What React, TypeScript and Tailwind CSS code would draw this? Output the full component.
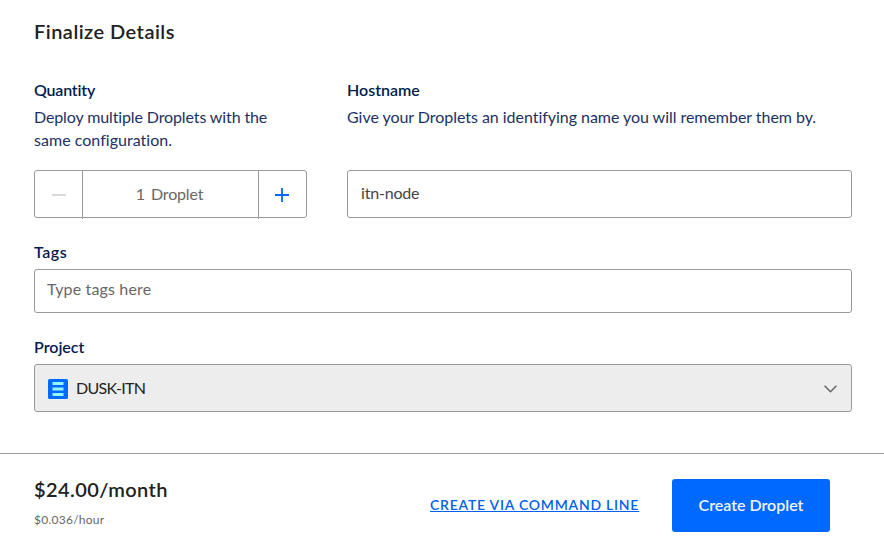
import React from "react";

function FieldLabel({ children, className = "" }: { children: React.ReactNode; className?: string }) {
  return <div className={"h-6 text-base leading-6 font-semibold whitespace-nowrap text-[#031b4e] " + className}>{children}</div>;
}

function ProjectIcon() {
  return (
    <svg width="20" height="20" viewBox="0 0 20 20" className="mt-0.5 shrink-0">
      <rect width="20" height="20" rx="1.5" fill="#0069ff" />
      <path d="M4.5 3h11v3h-11zM4.5 8.5h11v3h-11zM4.5 14h11v3h-11z" fill="#99f4fa" />
    </svg>
  );
}

export default function App() {
  return (
    <div className="h-[551px] w-[884px] overflow-hidden bg-white font-[Lato,'Open_Sans',sans-serif] [font-variant-ligatures:none]">
      <main className="flex h-[453px] flex-col pr-8 pl-[34px]">
        <h1 className="mt-[17px] h-7 text-xl leading-7 font-semibold text-[#222]">
          <span className="tracking-[0.47px]">Finalize Details</span>
        </h1>
        <div className="mt-[33px] flex gap-10">
          <section className="w-[273px]">
            <FieldLabel><span className="tracking-[-0.2px]">Quantity</span></FieldLabel>
            <p className="mt-[3px] h-[65px] text-base leading-[23px] whitespace-nowrap text-[#1b3163]">
              <span className="tracking-[-0.12px]">Deploy multiple Droplets with the</span>
              <br />
              <span className="tracking-[0.03px]">same configuration.</span>
            </p>
            <div className="flex h-12 rounded-[3px] border border-[#999]">
              <button className="flex w-[47px] items-center justify-center pt-0.5" aria-label="Decrease">
                <svg width="14" height="14" viewBox="0 0 14 14" stroke="#ccc" strokeWidth="1.5"><path d="M0 7h14" /></svg>
              </button>
              <div className="flex h-12 w-[177px] items-center justify-center gap-1.5 border-x border-[#999] pr-0.5 pb-0.5 text-base text-[#676767]">
                <span>1</span><span className="tracking-[-0.15px]">Droplet</span>
              </div>
              <button className="flex w-[47px] items-center justify-center pt-0.5 pr-px" aria-label="Increase">
                <svg width="14" height="14" viewBox="0 0 14 14" stroke="#0069ff" strokeWidth="1.8"><path d="M0 7h14M7 0v14" /></svg>
              </button>
            </div>
          </section>
          <section className="w-[505px]">
            <FieldLabel><span>Hostname</span></FieldLabel>
            <p className="mt-[3px] h-[65px] text-base leading-[23px] whitespace-nowrap text-[#1b3163]">
              <span className="tracking-[-0.04px]">Give your Droplets an identifying name you will remember them by.</span>
            </p>
            <div className="flex h-12 items-center rounded-[3px] border border-[#999] px-[13px] pb-0.5 text-base text-[#444]">
              <span className="tracking-[-0.2px]">itn-node</span>
            </div>
          </section>
        </div>
        <FieldLabel className="mt-[22px]"><span className="tracking-[0.5px]">Tags</span></FieldLabel>
        <div className="mt-[5px] flex h-11 items-center rounded-[3px] border border-[#999] px-3 pb-1 text-base text-[#676767]">
          <span className="tracking-[0.15px]">Type tags here</span>
        </div>
        <FieldLabel className="mt-[22px]"><span>Project</span></FieldLabel>
        <div className="mt-[5px] flex h-12 items-center rounded-[3px] border border-[#999] bg-[#ededed] pr-[14px] pl-[13px] text-base text-[#222]">
          <ProjectIcon />
          <span className="ml-2 tracking-[-0.7px]">DUSK-ITN</span>
          <svg className="mt-px ml-auto" width="13" height="8" viewBox="0 0 13 8" fill="none" stroke="#676767" strokeWidth="1.6"><path d="M.6.8l5.9 5.9L12.4.8" /></svg>
        </div>
      </main>
      <footer className="flex h-[98px] items-start border-t border-[#999] pr-[54px] pl-[34px]">
        <div className="mt-[21px] w-[396px]">
          <div className="h-7 text-xl leading-7 font-semibold text-[#222]"><span className="tracking-[0.4px]">$24.00/month</span></div>
          <div className="mt-[7px] h-5 text-xs leading-5 text-[#676767]"><span className="tracking-[0.25px]">$0.036/hour</span></div>
        </div>
        <a className="mt-[41px] text-sm leading-5 font-semibold whitespace-nowrap text-[#0061eb] underline"><span className="tracking-[0.76px]">CREATE VIA COMMAND LINE</span></a>
        <button className="mt-[25px] ml-auto flex h-[53px] w-[158px] items-center justify-center rounded-[3px] bg-[#0069ff] pb-0.5 text-base font-semibold whitespace-nowrap text-[#f3f5f9]">
          <span>Create Droplet</span>
        </button>
      </footer>
    </div>
  );
}
